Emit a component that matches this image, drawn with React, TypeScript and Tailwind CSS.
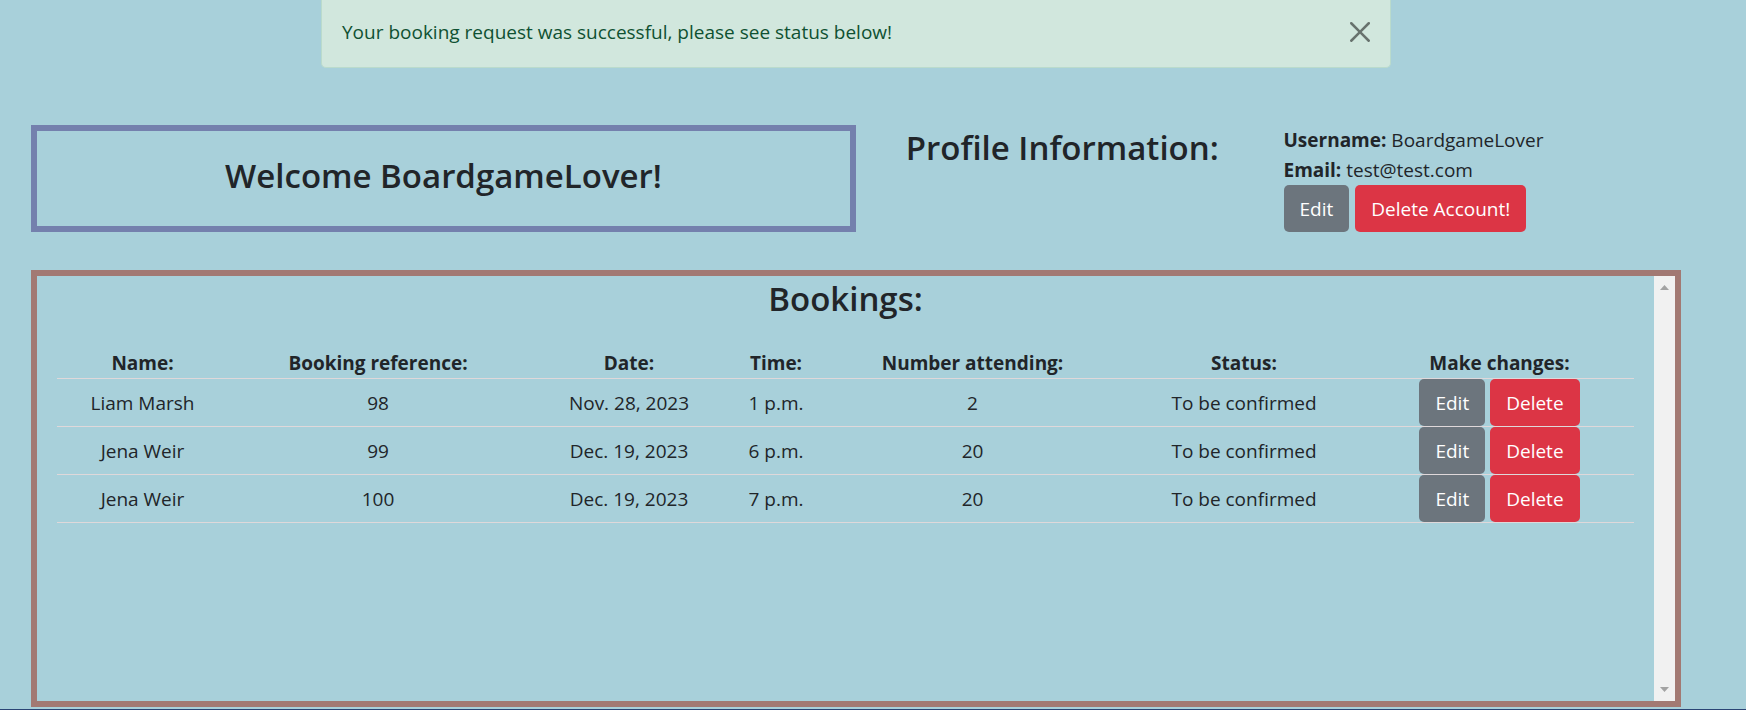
type Booking = {
  name: string;
  reference: number;
  date: string;
  time: string;
  attending: number;
  status: string;
};

const bookings: Booking[] = [
  { name: "Liam Marsh", reference: 98, date: "Nov. 28, 2023", time: "1 p.m.", attending: 2, status: "To be confirmed" },
  { name: "Jena Weir", reference: 99, date: "Dec. 19, 2023", time: "6 p.m.", attending: 20, status: "To be confirmed" },
  { name: "Jena Weir", reference: 100, date: "Dec. 19, 2023", time: "7 p.m.", attending: 20, status: "To be confirmed" },
];

const headings = ["Name:", "Booking reference:", "Date:", "Time:", "Number attending:", "Status:", "Make changes:"];

function ActionButton({ label, danger = false }: { label: string; danger?: boolean }) {
  return (
    <button
      type="button"
      className={`h-[47px] rounded-[5px] px-4 whitespace-nowrap text-white ${danger ? "bg-[#dc3545]" : "bg-[#6c757d]"}`}
    >
      {label}
    </button>
  );
}

function SuccessAlert() {
  return (
    <div
      role="alert"
      className="mx-auto flex h-[68px] max-w-[1070px] items-center justify-between rounded-b-[5px] border border-t-0 border-[#badbcc] bg-[#d1e7dd] px-5 pb-[3px] text-[#0f5132]"
    >
      <p>Your booking request was successful, please see status below!</p>
      <button type="button" aria-label="Close" className="text-black opacity-50">
        <svg width="20" height="20" viewBox="0 0 16 16" fill="currentColor" aria-hidden="true">
          <path d="M.293.293a1 1 0 0 1 1.414 0L8 6.586 14.293.293a1 1 0 1 1 1.414 1.414L9.414 8l6.293 6.293a1 1 0 0 1-1.414 1.414L8 9.414l-6.293 6.293a1 1 0 0 1-1.414-1.414L6.586 8 .293 1.707a1 1 0 0 1 0-1.414z" />
        </svg>
      </button>
    </div>
  );
}

function ScrollTrack() {
  return (
    <div aria-hidden="true" className="flex w-[21px] shrink-0 flex-col items-center justify-between bg-[#f1f1f1] py-[9px] text-[#a3a3a3]">
      <svg width="9" height="5" viewBox="0 0 9 5" fill="currentColor">
        <path d="M0 5 4.5 0 9 5z" />
      </svg>
      <svg width="9" height="5" viewBox="0 0 9 5" fill="currentColor">
        <path d="M0 0 4.5 5 9 0z" />
      </svg>
    </div>
  );
}

export default function App() {
  return (
    <div className="flex min-h-screen flex-col bg-[#a8d0da] font-['Open_Sans','Noto_Sans',sans-serif] text-[19px] leading-[30px] text-[#212529]">
      <main className="mr-[65px] ml-[31px]">
        <SuccessAlert />

        <section className="mt-[57px] grid grid-cols-[2fr_1fr_1fr]">
          <div className="flex items-center justify-center border-6 border-[#7480ad] pb-1.5">
            <h1 className="text-[33px] leading-[40px] font-semibold">Welcome BoardgameLover!</h1>
          </div>
          <h2 className="pt-[3px] text-center text-[33px] leading-[40px] font-semibold">Profile Information:</h2>
          <div className="pl-[15px]">
            <p>
              <strong className="font-bold">Username:</strong> BoardgameLover
            </p>
            <p>
              <strong className="font-bold">Email:</strong> test@test.com
            </p>
            <div className="flex gap-1.5">
              <ActionButton label="Edit" />
              <ActionButton label="Delete Account!" danger />
            </div>
          </div>
        </section>

        <section className="mt-[38px] flex min-h-[437px] border-6 border-[#a27973]">
          <div className="flex-1 px-5">
            <h2 className="mb-[29px] pt-[3px] text-center text-[33px] leading-[40px] font-semibold">Bookings:</h2>
            <table className="w-full table-fixed text-center">
              <colgroup>
                <col className="w-[171px]" />
                <col className="w-[300px]" />
                <col className="w-[202px]" />
                <col className="w-[92px]" />
                <col className="w-[301px]" />
                <col className="w-[242px]" />
                <col className="w-[269px]" />
              </colgroup>
              <thead>
                <tr className="border-b border-[#dfd8da]">
                  {headings.map((heading) => (
                    <th key={heading} scope="col" className="font-bold">
                      {heading}
                    </th>
                  ))}
                </tr>
              </thead>
              <tbody>
                {bookings.map((booking) => (
                  <tr key={booking.reference} className="border-b border-[#dfd8da]">
                    <td>{booking.name}</td>
                    <td>{booking.reference}</td>
                    <td>{booking.date}</td>
                    <td>{booking.time}</td>
                    <td>{booking.attending}</td>
                    <td>{booking.status}</td>
                    <td>
                      <div className="flex justify-center gap-[5px]">
                        <ActionButton label="Edit" />
                        <ActionButton label="Delete" danger />
                      </div>
                    </td>
                  </tr>
                ))}
              </tbody>
            </table>
          </div>
          <ScrollTrack />
        </section>
      </main>
      <footer className="mt-auto h-px bg-[#2b4575]" />
    </div>
  );
}
